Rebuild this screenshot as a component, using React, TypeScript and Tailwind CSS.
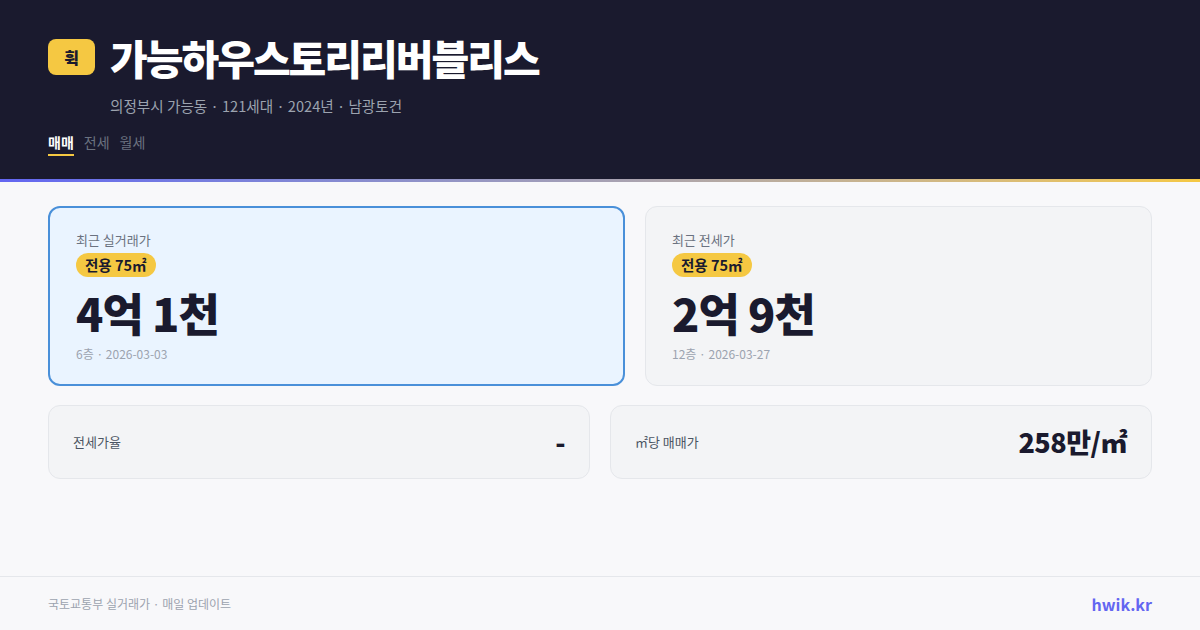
import React from 'react';

const font = { fontFamily: '"Noto Sans CJK KR", "Noto Sans", sans-serif' };

const tabs = ['매매', '전세', '월세'];

interface PriceCardProps {
  label: string;
  area: string;
  price: string;
  meta: string;
  active?: boolean;
}

const PriceCard: React.FC<PriceCardProps> = ({ label, area, price, meta, active }) => (
  <div
    className={`rounded-xl px-[26px] pt-[22px] pb-[20px] ${
      active ? 'border-2 border-[#4a90d9] bg-[#eaf4ff]' : 'border border-[#e5e7eb] bg-[#f3f4f6] pt-[23px] pb-[21px]'
    }`}
  >
    <div className="text-[13px] leading-5 text-[#6b7280]">{label}</div>
    <div className="mt-[3px] inline-flex h-6 items-center rounded-full bg-[#f5c842] px-[9px] text-[14.5px] font-bold text-[#1a1a2e]">
      {area}
    </div>
    <div className="mt-[9px] text-[45px] font-black leading-[54px] tracking-[-1px] text-[#1a1a2e]">{price}</div>
    <div className="mt-[4px] text-[12px] leading-5 text-[#9ca3af]">{meta}</div>
  </div>
);

const StatCard: React.FC<{ label: string; value: string }> = ({ label, value }) => (
  <div className="flex h-[74px] items-center justify-between rounded-xl border border-[#e5e7eb] bg-[#f3f4f6] px-6">
    <span className="text-[13px] text-[#4b5563]">{label}</span>
    <span className="text-[27px] font-black tracking-[-0.5px] text-[#1a1a2e]">{value}</span>
  </div>
);

export default function App() {
  return (
    <div className="flex h-[630px] w-[1200px] flex-col overflow-hidden bg-[#f8f8fa]" style={font}>
      <header className="h-[179px] bg-[#1a1a2e] px-12 pt-[39px]">
        <div className="flex items-center gap-[15px]">
          <div className="flex h-9 w-[47px] items-center justify-center rounded-lg bg-[#f5c842] text-[16px] font-black text-[#1a1a2e]">
            휙
          </div>
          <h1 className="text-[41px] font-black leading-9 tracking-[-2px] text-white">가능하우스토리리버블리스</h1>
        </div>
        <p className="mt-[21px] pl-[62px] text-[14.6px] leading-5 text-[#9ca3af]">
          의정부시 가능동 · 121세대 · 2024년 · 남광토건
        </p>
        <nav className="mt-[16px] flex gap-[10px] text-[14px] leading-5">
          {tabs.map((t, i) => (
            <span
              key={t}
              className={
                i === 0
                  ? 'border-b-2 border-[#f5c842] pb-[2px] font-bold text-white'
                  : 'pb-[2px] text-[#6b7280]'
              }
            >
              {t}
            </span>
          ))}
        </nav>
      </header>
      <div className="h-[3px] bg-gradient-to-r from-[#6366f1] to-[#f5c842]" />

      <main className="flex-1 px-12 pt-6">
        <div className="grid grid-cols-[577px_1fr] gap-5">
          <PriceCard label="최근 실거래가" area="전용 75㎡" price="4억 1천" meta="6층 · 2026-03-03" active />
          <PriceCard label="최근 전세가" area="전용 75㎡" price="2억 9천" meta="12층 · 2026-03-27" />
        </div>
        <div className="mt-[19px] grid grid-cols-2 gap-5">
          <StatCard label="전세가율" value="-" />
          <StatCard label="㎡당 매매가" value="258만/㎡" />
        </div>
      </main>

      <footer className="flex h-[54px] items-center justify-between border-t border-[#e5e7eb] px-12">
        <span className="text-[12px] text-[#9ca3af]">국토교통부 실거래가 · 매일 업데이트</span>
        <span className="text-[16px] font-bold text-[#6366f1]">hwik.kr</span>
      </footer>
    </div>
  );
}
